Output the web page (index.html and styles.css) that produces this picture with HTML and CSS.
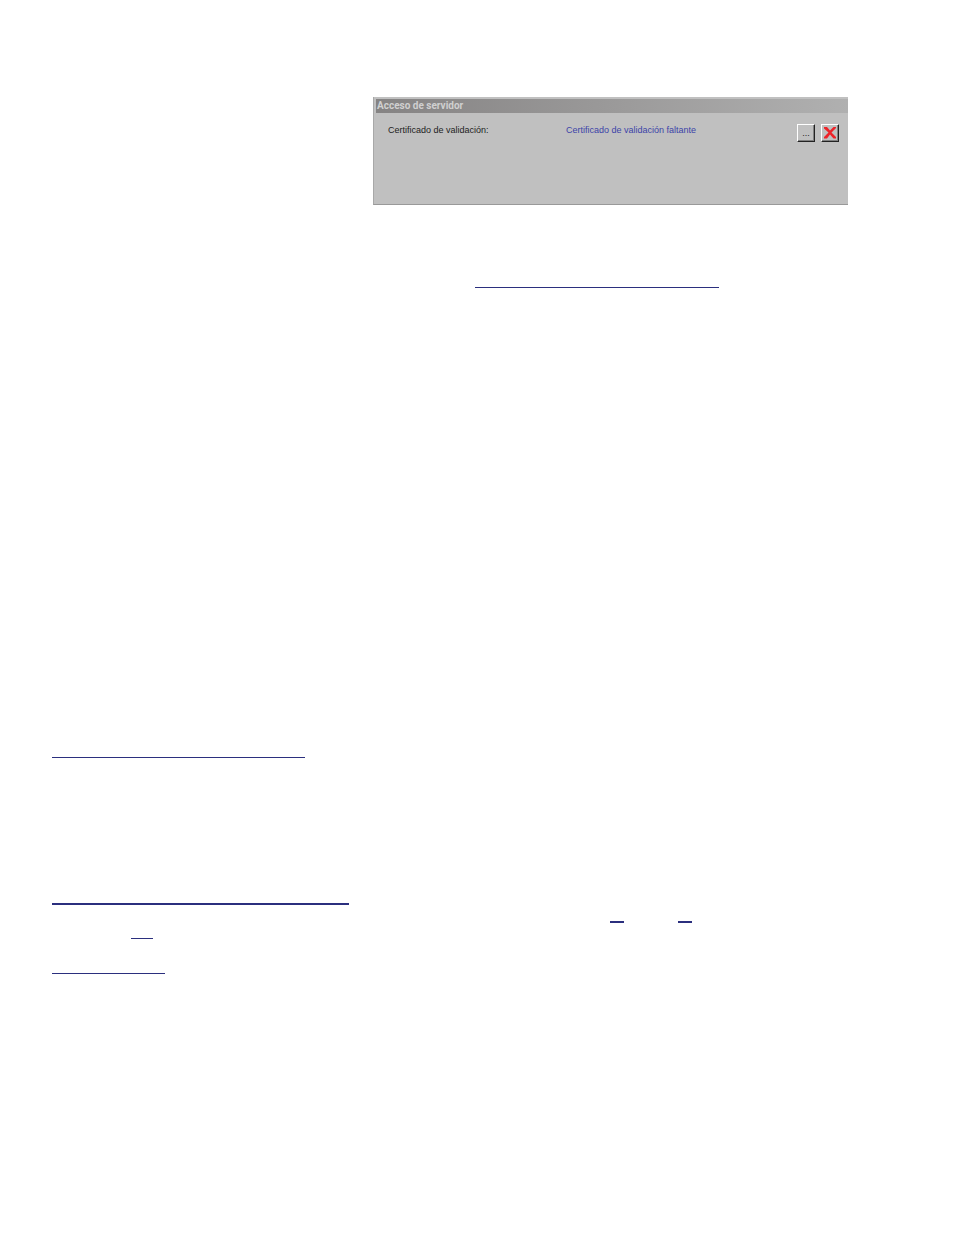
FILE: index.html
```
<!DOCTYPE html>
<html lang="es">
	<head>
		<meta charset="UTF-8">
		<meta name="viewport" content="width=device-width, initial-scale=1">
		<title>Acceso de servidor</title>
		<link rel="stylesheet" href="styles.css">
	</head>
	<body>
		<main class="page">
			<section class="dialog">
				<h1 class="dialog-title">Acceso de servidor</h1>
				<div class="dialog-row">
					<span class="label">Certificado de validación:</span>
					<span class="value">Certificado de validación faltante</span>
					<div class="buttons">
						<button class="button" type="button">...</button>
						<button class="button" type="button" aria-label="Eliminar">
							<svg class="cross" viewBox="0 0 12 12">
								<path d="M0 0H3L6 3.5L9.500 0H12V1L7.500 5.500L12 10V11.500H9.500L6 7.500L3 11.500H0V10L4.500 5.500L0 1.500Z"/>
							</svg>
						</button>
					</div>
				</div>
			</section>

			<hr class="rule rule-center">
			<hr class="rule rule-left">
			<hr class="rule rule-heading">
			<div class="marks">
				<hr class="rule mark">
				<hr class="rule mark">
			</div>
			<hr class="rule rule-short">
			<hr class="rule rule-last">
		</main>
	</body>
</html>
```
FILE: styles.css
```
*{
	box-sizing: border-box;
}
body{
	margin: 0;
	background: #fff;
	font-family: "Liberation Sans", Arial, sans-serif;
}
.page{
	display: flex;
	flex-direction: column;
	padding: 97px 106px 48px 52px;
}
.dialog{
	min-height: 108px;
	margin-left: 321px;
	padding: 2px 0 0 2px;
	background: #c0c0c0;
	border-left: 1px solid #a8a8a8;
	border-bottom: 1px solid #999;
}
.dialog-title{
	margin: 0;
	padding-left: 1px;
	background: linear-gradient(to right, #858383, #b0b0b0);
	color: #d0d0d0;
	font-family: Roboto, "Liberation Sans", sans-serif;
	font-size: 10px;
	line-height: 14px;
}
.dialog-row{
	display: grid;
	grid-template-columns: 178px 1fr auto;
	padding: 11px 9px 0 12px;
	font-size: 9px;
	line-height: 12px;
	color: #222;
}
.value{
	color: #3c43a8;
}
.buttons{
	display: flex;
	gap: 6px;
}
.button{
	display: flex;
	align-items: center;
	justify-content: center;
	width: 18px;
	height: 18px;
	padding: 0;
	background: #c0c0c0;
	border: 1px solid;
	border-color: #fff #222 #222 #fff;
	box-shadow: inset -1px -1px #808080;
	color: #222;
	font: 9px/12px "Liberation Sans", Arial, sans-serif;
}
.cross{
	width: 12px;
	height: 12px;
	fill: #ed2228;
}
.rule{
	height: 1px;
	margin: 0;
	border: 0;
	background: #2b2f7e;
}
.rule-center{
	width: 244px;
	margin: 82px 0 0 423px;
}
.rule-left{
	width: 253px;
	margin-top: 469px;
}
.rule-heading{
	width: 297px;
	height: 2px;
	margin-top: 145px;
}
.marks{
	display: flex;
	gap: 54px;
	margin: 16px 0 0 558px;
}
.mark{
	width: 14px;
	height: 2px;
}
.rule-short{
	width: 22px;
	margin: 15px 0 0 79px;
}
.rule-last{
	width: 113px;
	margin-top: 34px;
}
```
